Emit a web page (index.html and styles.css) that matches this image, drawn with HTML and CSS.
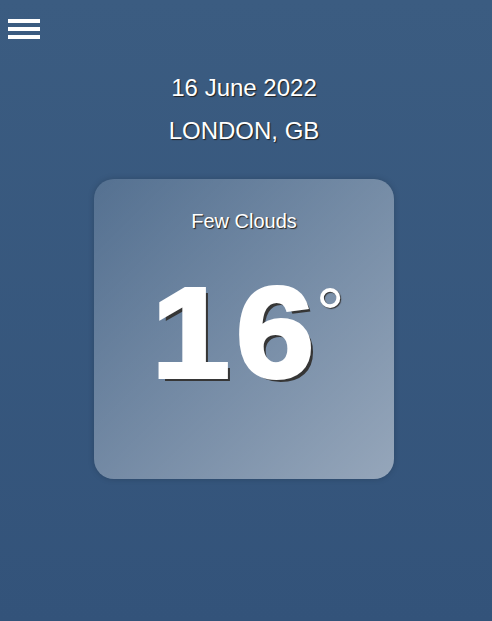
FILE: index.html
```html
<!DOCTYPE html>
<html lang="en">
<head>
<meta charset="utf-8">
<title>Weather</title>
<link rel="stylesheet" href="styles.css">
</head>
<body>
<div class="app">
  <header class="topbar">
    <button class="menu" aria-label="Menu">
      <span class="bar"></span>
      <span class="bar"></span>
      <span class="bar"></span>
    </button>
  </header>
  <main class="content">
    <p class="date">16 June 2022</p>
    <p class="city">LONDON, GB</p>
    <section class="card">
      <p class="desc">Few Clouds</p>
      <p class="temp"><span class="num"><span class="one">1</span>6</span><span class="deg">°</span></p>
    </section>
  </main>
</div>
</body>
</html>
```

FILE: styles.css
```css
html, body {
  margin: 0;
  padding: 0;
  height: 100%;
}
body {
  font-family: "Liberation Sans", Arial, sans-serif;
  color: #fff;
  background: linear-gradient(to bottom, #3b5c81, #33537a);
}
.app {
  min-height: 100%;
}
.topbar {
  padding: 19px 0 0 8px;
  height: 20px;
}
.menu {
  display: flex;
  flex-direction: column;
  gap: 4px;
  padding: 0;
  border: 0;
  background: none;
}
.bar {
  display: block;
  width: 32px;
  height: 4px;
  background: #fff;
}
.content {
  display: flex;
  flex-direction: column;
  align-items: center;
  padding-right: 4px;
}
.date, .city {
  margin: 0;
  font-size: 24px;
  line-height: 28px;
  text-shadow: 1px 1px 1px #222;
}
.date {
  margin-top: 35px;
}
.city {
  margin-top: 15px;
}
.card {
  margin-top: 34px;
  width: 300px;
  height: 300px;
  box-sizing: border-box;
  border-radius: 20px;
  background: linear-gradient(to bottom right, rgba(255,255,255,0.14), rgba(255,255,255,0.48));
  box-shadow: 0 0 6px rgba(0,0,0,0.18);
  display: flex;
  flex-direction: column;
  align-items: center;
  padding-top: 31px;
}
.desc {
  margin: 0;
  font-size: 20px;
  line-height: 23px;
  text-shadow: 1px 1px 1px #222;
}
.temp {
  margin: 36px 0 0 0;
  padding-left: 9px;
  display: flex;
  align-items: flex-start;
  line-height: 1;
}
.num {
  display: inline-block;
  font-size: 128px;
  font-weight: bold;
  -webkit-text-stroke: 4px #fff;
  text-shadow: 4px 4px 0 #363636;
  transform: scaleX(1.09);
  transform-origin: left center;
}
.one {
  letter-spacing: 6px;
}
.deg {
  font-size: 72px;
  font-weight: normal;
  margin-top: 8px;
  margin-left: 15px;
  text-shadow: 1px 1px 1px #333;
}
```
